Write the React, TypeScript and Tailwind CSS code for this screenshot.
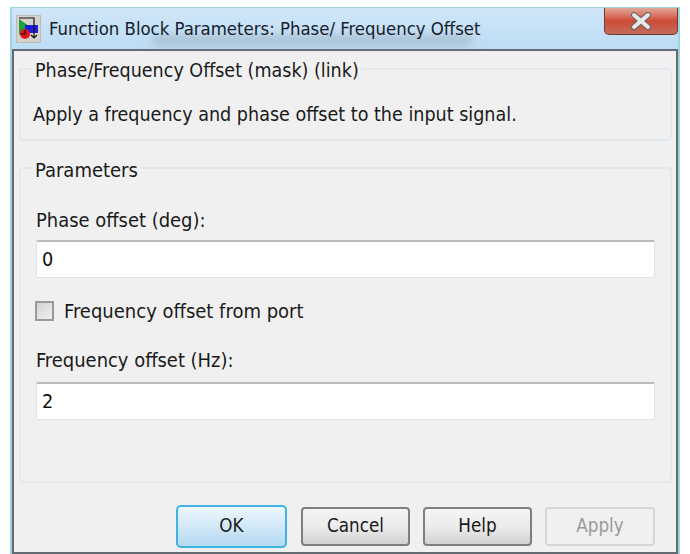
import React from "react";

const font = { fontFamily: '"DejaVu Sans Condensed", "DejaVu Sans", sans-serif' };

// Simulink block glyph for the title bar
function BlockIcon() {
  return (
    <svg width="25" height="28" viewBox="0 0 25 28" className="shrink-0">
      <rect x="0" y="0" width="25" height="28" fill="#bdbab4" />
      <rect x="1" y="1" width="23" height="26" fill="#d6d3cd" />
      <polygon points="3,4 3,20 13,14 13,11" fill="#1fa03a" />
      <rect x="9" y="10" width="13" height="8" fill="#1c1fe0" />
      <circle cx="9" cy="19" r="5" fill="#e3121c" />
      <path d="M3 3H18V22M15 20L18 23L21 20M5 19H9V15" fill="none" stroke="#111" strokeWidth="1.2" />
    </svg>
  );
}

function Group({ legend, legendClass, className, children }: { legend: string; legendClass: string; className: string; children: React.ReactNode }) {
  return (
    <fieldset className={`border-2 border-[#e2e9ee] rounded-[4px] min-w-0 ${className}`}>
      <legend className={`ml-[12px] px-[2px] pt-[4px] leading-[26px] text-[#1a1a1a] ${legendClass}`}>{legend}</legend>
      {children}
    </fieldset>
  );
}

function TextField({ value }: { value: string }) {
  return (
    <div className="h-[38px] bg-white border border-[#dfe3e6] border-t-2 border-t-[#b9bbbd] rounded-[2px] pl-[5px] flex items-center text-[19.7px] text-[#111]">
      {value}
    </div>
  );
}

function DialogButton({ label, disabled }: { label: string; disabled?: boolean }) {
  return (
    <button
      className={
        disabled
          ? "w-[110px] h-[39px] rounded-[4px] border-2 border-[#d4d6d8] bg-[#f0f0f0] text-[18.7px] text-[#9a9a9a]"
          : "w-[109px] h-[39px] rounded-[4px] border-2 border-[#7f7f7f] bg-gradient-to-b from-[#f4f4f4] via-[#ececec] to-[#d2d2d2] text-[18.7px] text-[#1a1a1a]"
      }
    >
      {label}
    </button>
  );
}

export default function App() {
  return (
    <div className="w-[690px] h-[554px] bg-white pt-[7px] pl-[10px] overflow-hidden" style={font}>
      <div className="w-[670px] h-[547px] flex flex-col border-t border-l-[2px] border-r-[2px] border-[#9fd3e2] bg-[#bcdcf4]">
        <div className="relative h-[41px] shrink-0 flex items-center pl-[4px] gap-[8px] bg-gradient-to-b from-[#cfe6f8] to-[#bddcf4]">
          <div className="absolute left-[140px] top-[28px] w-[320px] h-[9px] bg-[#8d99a5] opacity-50 blur-[5px]" />
          <BlockIcon />
          <span className="relative text-[18.4px] text-[#16202c] whitespace-nowrap">
            Function Block Parameters: Phase/ Frequency Offset
          </span>
          <div className="absolute right-0 top-0 w-[74px] h-[27px] rounded-b-[5px] border border-t-0 border-[#6f3a33] bg-gradient-to-b from-[#e2a79a] via-[#cd4a34] to-[#c26a5c] flex items-center justify-center">
            <svg width="24" height="18" viewBox="0 0 24 18">
              <path d="M5 3L19 15M19 3L5 15" stroke="#666" strokeWidth="6" strokeLinecap="round" />
              <path d="M5 3L19 15M19 3L5 15" stroke="#e8e8e8" strokeWidth="4" strokeLinecap="round" />
            </svg>
          </div>
        </div>
        <div className="flex-1 flex flex-col border-2 border-[#646b72] bg-[#f0f0f0] pt-[3px] pl-[5px] pr-[4px]">
          <Group legend="Phase/Frequency Offset (mask) (link)" legendClass="text-[19.5px]" className="h-[87px]">
            <p className="text-[19.55px] leading-[26px] mt-[18px] ml-[12px] text-[#1a1a1a]">
              Apply a frequency and phase offset to the input signal.
            </p>
          </Group>
          <Group legend="Parameters" legendClass="text-[20px]" className="h-[330px] mt-[12px]">
            <div className="pl-[15px] pr-[15px]">
              <div className="text-[19.95px] leading-[26px] mt-[24px] text-[#1a1a1a]">Phase offset (deg):</div>
              <div className="mt-[7px]">
                <TextField value="0" />
              </div>
              <label className="flex items-center gap-[10px] mt-[21px] -ml-[1px] h-[24px] text-[20px] text-[#1a1a1a]">
                <span className="w-[19px] h-[20px] border-2 border-[#9a9a9a] bg-gradient-to-br from-[#d4d4d4] to-[#f0f0f0] shrink-0" />
                Frequency offset from port
              </label>
              <div className="text-[19.95px] leading-[26px] mt-[24px] text-[#1a1a1a]">Frequency offset (Hz):</div>
              <div className="mt-[9px]">
                <TextField value="2" />
              </div>
            </div>
          </Group>
          <div className="flex items-center mt-[22px] pl-[157px]">
            <button className="w-[111px] h-[43px] rounded-[5px] border-2 border-[#3fb4e4] bg-gradient-to-b from-[#eef7fd] to-[#b4d9f1] text-[18.7px] text-[#1a1a1a]">
              OK
            </button>
            <div className="flex gap-[13px] ml-[14px]">
              <DialogButton label="Cancel" />
              <DialogButton label="Help" />
              <DialogButton label="Apply" disabled />
            </div>
          </div>
        </div>
      </div>
    </div>
  );
}
